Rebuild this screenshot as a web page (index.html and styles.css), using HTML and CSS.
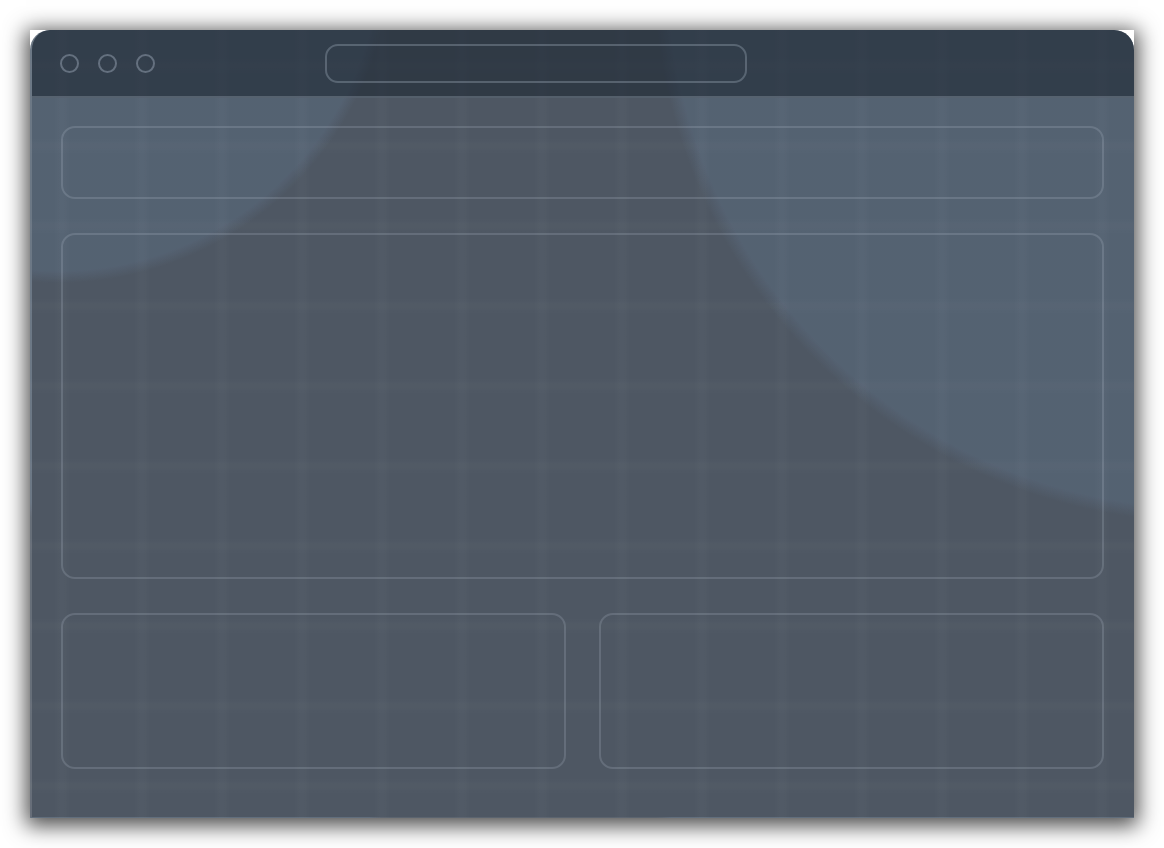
FILE: index.html
```html
<!DOCTYPE html>
<html lang="en">
<head>
<meta charset="utf-8">
<title>Window mockup</title>
<link rel="stylesheet" href="styles.css">
</head>
<body>
<div class="frame">
  <div class="window">
    <div class="titlebar">
      <div class="dots">
        <span class="dot"></span>
        <span class="dot"></span>
        <span class="dot"></span>
      </div>
      <div class="urlbar"></div>
    </div>
    <div class="content">
      <div class="card card-header"></div>
      <div class="card card-main"></div>
      <div class="row">
        <div class="card card-half"></div>
        <div class="card card-half"></div>
      </div>
    </div>
  </div>
</div>
</body>
</html>
```

FILE: styles.css
```css
html, body {
  margin: 0;
  padding: 0;
  background: #ffffff;
  font-family: "Liberation Sans", Arial, sans-serif;
}

body {
  box-sizing: border-box;
  min-height: 848px;
  padding: 30px 30px 30px 30px;
}

.frame {
  width: 1104px;
  height: 788px;
  background: #ffffff;
  box-shadow: 0 4px 20px 4px rgba(0, 0, 0, 0.7);
}

.window {
  height: 100%;
  box-sizing: border-box;
  border-radius: 20px 20px 0 0;
  overflow: hidden;
  display: flex;
  flex-direction: column;
  border-left: 2px solid rgba(255, 255, 255, 0.14);
  border-bottom: 1px solid rgba(255, 255, 255, 0.08);
  background:
    repeating-linear-gradient(90deg,
      rgba(255, 255, 255, 0) 0px,
      rgba(255, 255, 255, 0) 22px,
      rgba(255, 255, 255, 0.02) 28px,
      rgba(255, 255, 255, 0.02) 32px,
      rgba(255, 255, 255, 0) 38px,
      rgba(255, 255, 255, 0) 80px),
    repeating-linear-gradient(180deg,
      rgba(255, 255, 255, 0) 0px,
      rgba(255, 255, 255, 0) 28px,
      rgba(255, 255, 255, 0.014) 34px,
      rgba(255, 255, 255, 0.014) 38px,
      rgba(255, 255, 255, 0) 44px,
      rgba(255, 255, 255, 0) 80px),
    radial-gradient(circle 329px at 26px -81px,
      rgba(110, 140, 172, 0.2) 0,
      rgba(110, 140, 172, 0.2) 322px,
      rgba(110, 140, 172, 0) 334px),
    radial-gradient(circle 547px at 1174px -60px,
      rgba(110, 140, 172, 0.2) 0,
      rgba(110, 140, 172, 0.2) 538px,
      rgba(110, 140, 172, 0) 552px),
    #4e5763;
}

.titlebar {
  flex: 0 0 auto;
  height: 66px;
  display: flex;
  align-items: center;
  padding-left: 28px;
  background: rgba(28, 38, 50, 0.6);
  border-bottom: 2px solid rgba(190, 200, 215, 0.26);
}

.dots {
  display: flex;
  gap: 19px;
  padding-top: 1px;
}

.dot {
  display: block;
  width: 19px;
  height: 19px;
  box-sizing: border-box;
  border-radius: 50%;
  border: 2px solid rgba(170, 182, 198, 0.42);
}

.urlbar {
  margin-left: 170px;
  width: 422px;
  height: 39px;
  box-sizing: border-box;
  border-radius: 13px;
  border: 2px solid rgba(170, 182, 198, 0.32);
}

.content {
  flex: 1 1 auto;
  display: flex;
  flex-direction: column;
  gap: 34px;
  padding: 28px 30px 0 29px;
}

.card {
  box-sizing: border-box;
  border-radius: 14px;
  border: 2px solid rgba(190, 200, 215, 0.2);
}

.card-header {
  height: 73px;
}

.card-main {
  height: 346px;
}

.row {
  display: grid;
  grid-template-columns: 1fr 1fr;
  gap: 33px;
}

.card-half {
  height: 156px;
}
```
